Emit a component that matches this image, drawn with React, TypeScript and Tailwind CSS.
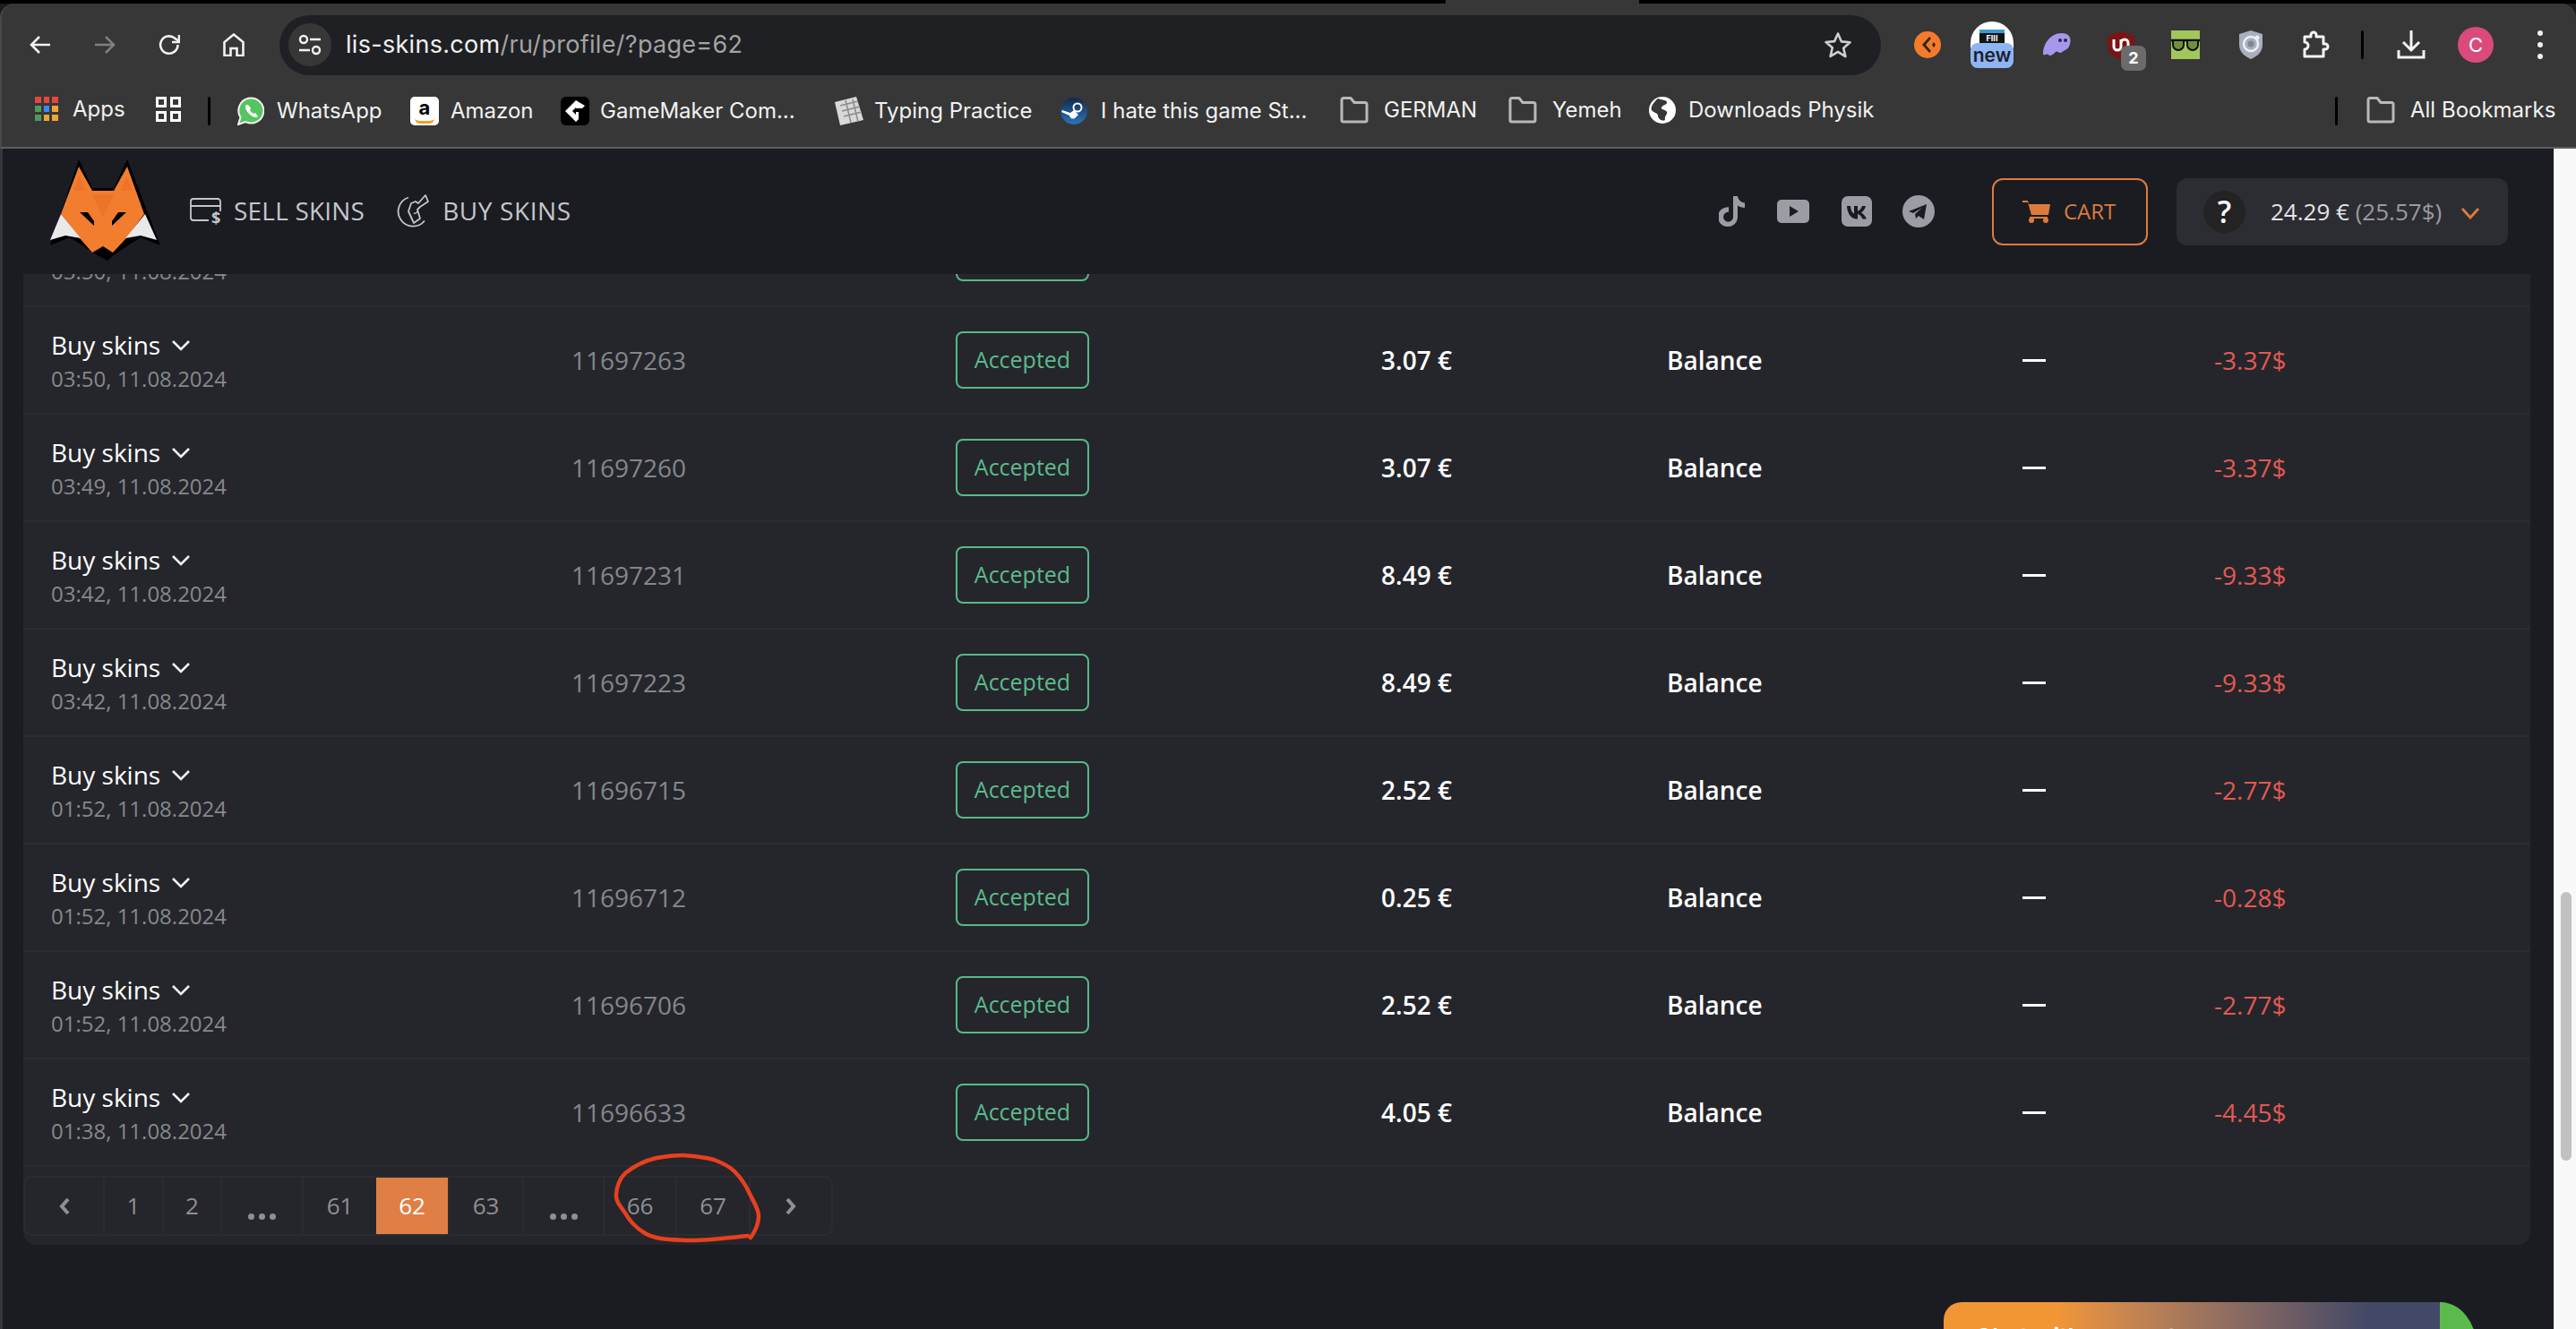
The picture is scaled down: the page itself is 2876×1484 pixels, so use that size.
import React from "react";

const ui = "font-['Inter','Liberation_Sans',sans-serif]";
const page = "font-['Open_Sans','Liberation_Sans',sans-serif]";

const rows = [
  ["03:50, 11.08.2024", "11697265", "3.07 €", "-3.37$"],
  ["03:50, 11.08.2024", "11697263", "3.07 €", "-3.37$"],
  ["03:49, 11.08.2024", "11697260", "3.07 €", "-3.37$"],
  ["03:42, 11.08.2024", "11697231", "8.49 €", "-9.33$"],
  ["03:42, 11.08.2024", "11697223", "8.49 €", "-9.33$"],
  ["01:52, 11.08.2024", "11696715", "2.52 €", "-2.77$"],
  ["01:52, 11.08.2024", "11696712", "0.25 €", "-0.28$"],
  ["01:52, 11.08.2024", "11696706", "2.52 €", "-2.77$"],
  ["01:38, 11.08.2024", "11696633", "4.05 €", "-4.45$"],
];

function S({ w, h, children, className = "" }: { w: number; h: number; children: React.ReactNode; className?: string }) {
  return (
    <svg width={w} height={h} viewBox={`0 0 ${w} ${h}`} fill="none" className={"shrink-0 " + className}>
      {children}
    </svg>
  );
}

function Folder() {
  return (
    <S w={32} h={30}>
      <path d="M2 3.500a2 2 0 0 1 2-2h8l4 5h12a2 2 0 0 1 2 2V26a2 2 0 0 1-2 2H4a2 2 0 0 1-2-2Z" stroke="#b9b9b9" strokeWidth="3" strokeLinejoin="round" />
    </S>
  );
}

function Bm({ cls, icon, label, gap }: { cls: string; icon: React.ReactNode; label: string; gap: string }) {
  return (
    <div className={"flex items-center shrink-0 " + cls}>
      {icon}
      <span className={gap + " text-[24px] leading-none text-[#f1f1f1] whitespace-nowrap"}>{label}</span>
    </div>
  );
}

function Toolbar() {
  return (
    <div className={ui + " shrink-0"}>
      <div className="h-[4px] bg-black flex">
        <div className="w-[1614px]" />
        <div className="w-[216px] bg-[#373737]" />
      </div>
      <div className="h-[162px] bg-[#373737] rounded-t-[16px] flex flex-col relative border-b-2 border-[#5e5e5e] border-l-2 border-l-[#4a4a4a]">
        <div className="h-[92px] flex items-center">
          <div className="ml-[31px] w-[279px] flex items-center">
            <S w={24} h={24} className="mr-[48px]">
              <path d="M23 12H2M11 3l-9 9 9 9" stroke="#f2f2f2" strokeWidth="2.600" />
            </S>
            <S w={24} h={24} className="mr-[48px]">
              <path d="M1 12h21M13 3l9 9-9 9" stroke="#7f7f7f" strokeWidth="2.600" />
            </S>
            <S w={24} h={24} className="mr-[48px]">
              <path d="M21.500 12A9.700 9.700 0 1 1 18 4.600L23 8" stroke="#f2f2f2" strokeWidth="2.600" />
              <path d="M23 1v8h-8" stroke="#f2f2f2" strokeWidth="2.600" />
            </S>
            <S w={24} h={26}>
              <path d="M1.500 25V10L12 1.500 22.500 10v15h-7v-8h-7v8Z" stroke="#f2f2f2" strokeWidth="2.600" />
            </S>
          </div>
          <div className="w-[1788px] h-[67px] bg-[#1f2023] rounded-full flex items-center pl-[10px] shrink-0">
            <div className="w-[48px] h-[48px] rounded-full bg-[#373737] flex items-center justify-center">
              <S w={26} h={24}>
                <circle cx="6" cy="6" r="4" stroke="#f2f2f2" strokeWidth="2.400" />
                <path d="M13 6h12M1 18h12" stroke="#f2f2f2" strokeWidth="2.400" />
                <circle cx="20" cy="18" r="4" stroke="#f2f2f2" strokeWidth="2.400" />
              </S>
            </div>
            <span className="ml-[16px] text-[27px] tracking-[0.3px] text-[#f1f1f1] whitespace-nowrap">
              lis-skins.com<span className="text-[#a3a3a3]">/ru/profile/?page=62</span>
            </span>
            <div className="flex-1" />
            <S w={32} h={30} className="mr-[32px]">
              <path d="M16 2.500l3.900 8.900 9.600.9-7.300 6.400 2.200 9.400L16 22.800l-8.400 5 2.200-9.500-7.300-6.300 9.600-.9Z" stroke="#cfcfcf" strokeWidth="2.600" strokeLinejoin="round" />
            </S>
          </div>
          <div className="flex items-center ml-[37px]">
            <svg width="30" height="30" viewBox="0 0 30 30" className="shrink-0">
              <circle cx="15" cy="15" r="15" fill="#f47b2a" />
              <path d="M17 6l-8 9 8 9 2-2-6-7 6-7Z" fill="#33261c" />
              <path d="M22 12l2 3-2 3-2-3Z" fill="#33261c" />
            </svg>
            <div className="ml-[33px] w-[48px] h-[52px] relative shrink-0">
              <div className="absolute top-0 left-0 w-[48px] h-[30px] bg-white rounded-t-[24px] flex justify-center pt-[9px]">
                <div className="w-[28px] h-[21px] bg-[#141414] border-t-[4px] border-[#3d9bd0] text-[9px] leading-[12px] text-white text-center font-bold">FIII</div>
              </div>
              <div className="absolute bottom-0 left-0 w-[48px] h-[28px] bg-[#8fb4f2] rounded-[8px] text-[21px] leading-[28px] font-semibold text-[#1a1f2b] text-center">new</div>
            </div>
            <svg width="32" height="28" viewBox="0 0 32 28" className="ml-[32px] shrink-0">
              <path d="M1 24C1 12 10 1 22 1c6 0 10 3 9.500 9-.5 6-3 9-6 10-2 .8-3.500 3-5.500 3s-2-2-4-1.500C14 22 12 26 9 26c-2.500 0-2-2-4-1.500C3 25 1 26 1 24Z" fill="#a797ec" />
              <circle cx="20" cy="9" r="2" fill="#2a2a3a" />
              <circle cx="26" cy="9" r="2" fill="#2a2a3a" />
            </svg>
            <div className="ml-[41px] w-[30px] h-[31px] relative shrink-0">
              <svg width="30" height="32" viewBox="0 0 30 32">
                <path d="M15 0l15 5v13c0 6-7 11-15 14C7 29 0 24 0 18V5Z" fill="#7b1414" />
                <path d="M7 9v8a4 4 0 0 0 8 0V9M15 13a4 4 0 0 1 8 0v6" stroke="#fff" strokeWidth="3" fill="none" />
              </svg>
              <div className="absolute left-[15px] top-[16px] w-[28px] h-[28px] rounded-[7px] bg-[#6b6b6b] text-white text-[18px] leading-[28px] font-bold text-center">2</div>
            </div>
            <div className="ml-[41px] w-[32px] h-[32px] bg-[#a1c65a] flex items-center justify-center shrink-0">
              <svg width="32" height="14" viewBox="0 0 32 14">
                <path d="M0 2h32" stroke="#111" strokeWidth="2.500" />
                <path d="M2 2h12v5a5.500 5.500 0 0 1-12 0ZM18 2h12v5a5.500 5.500 0 0 1-12 0Z" fill="#6f8f3f" stroke="#111" strokeWidth="2" />
              </svg>
            </div>
            <svg width="28" height="32" viewBox="0 0 28 32" className="ml-[43px] shrink-0">
              <path d="M14 0l13 4v12c0 8-6 13-13 16C7 29 1 24 1 16V4Z" fill="#a9afbd" />
              <circle cx="14" cy="15" r="8" fill="none" stroke="#eef0f4" strokeWidth="2.500" />
              <circle cx="14" cy="15" r="3.500" fill="#7e8698" />
              <circle cx="21" cy="8" r="2.500" fill="#eef0f4" />
            </svg>
            <S w={32} h={32} className="ml-[43px]">
              <path d="M3 7h7V5a3 3 0 0 1 6 0v2h8v8h2a3 3 0 0 1 0 6h-2v8H3v-8a4 4 0 0 0 0-8Z" stroke="#f5f5f5" strokeWidth="3" strokeLinejoin="round" />
            </S>
            <div className="ml-[34px] w-[3px] h-[32px] bg-black rounded-full" />
            <S w={32} h={32} className="ml-[37px]">
              <path d="M16 0v21M7 13l9 9 9-9" stroke="#f5f5f5" strokeWidth="3" />
              <path d="M2 22v8h28v-8" stroke="#f5f5f5" strokeWidth="3" />
            </S>
            <div className="ml-[36px] w-[40px] h-[40px] rounded-full bg-[#db4a7d] text-white text-[22px] leading-[40px] text-center shrink-0">C</div>
            <div className="ml-[49px] flex flex-col gap-[7px] shrink-0">
              <div className="w-[6px] h-[6px] rounded-full bg-[#f2f2f2]" />
              <div className="w-[6px] h-[6px] rounded-full bg-[#f2f2f2]" />
              <div className="w-[6px] h-[6px] rounded-full bg-[#f2f2f2]" />
            </div>
          </div>
        </div>
        <div className="flex-1 flex items-start pt-[12px]">
          <Bm
            cls="ml-[37px] w-[135px]"
            gap="ml-[16px]"
            label="Apps"
            icon={
              <div className="grid grid-cols-3 gap-[3px] w-[26px] shrink-0">
                {["#e5483b", "#e5483b", "#e5483b", "#4e9a5b", "#4285f4", "#eaa636", "#4e9a5b", "#eaa636", "#eaa636"].map((c, i) => (
                  <div key={i} className="h-[7px]" style={{ background: c }} />
                ))}
              </div>
            }
          />
          <div className="w-[28px] h-[28px] grid grid-cols-2 gap-[4px] shrink-0">
            <div className="border-[3px] border-white" />
            <div className="border-[3px] border-white" />
            <div className="border-[3px] border-white" />
            <div className="border-[3px] border-white" />
          </div>
          <div className="ml-[30px] w-[3px] h-[32px] bg-black rounded-full shrink-0" />
          <Bm
            cls="ml-[30px] w-[193px]"
            gap="ml-[14px]"
            label="WhatsApp"
            icon={
              <svg width="30" height="32" viewBox="0 0 30 32" className="shrink-0">
                <path d="M1 31l2.500-8A14 14 0 1 1 9 28Z" fill="#56c45f" stroke="#f2f2f2" strokeWidth="2" />
                <path d="M10 9c-2 2-1 6 3 10s8 5 10 3l-3-4-2 1c-2-1-3-3-4-4l1-2-3-4Z" fill="#fff" />
              </svg>
            }
          />
          <Bm
            cls="w-[168px]"
            gap="ml-[13px]"
            label="Amazon"
            icon={
              <div className="w-[32px] h-[32px] bg-white rounded-[5px] relative shrink-0 text-black text-[22px] leading-[24px] font-bold text-center">
                a
                <div className="absolute bottom-[2px] left-[5px] w-[22px] h-[6px] border-b-[3px] border-[#f39c2b] rounded-b-full" />
              </div>
            }
          />
          <Bm
            cls="w-[306px]"
            gap="ml-[12px]"
            label="GameMaker Com..."
            icon={
              <svg width="32" height="32" viewBox="0 0 32 32" className="shrink-0">
                <rect width="32" height="32" rx="6" fill="#000" />
                <path d="M17 4L5 16l12 12 3-3v-8h-6l3-4h7l3-3Z" fill="#fff" />
                <path d="M13 16l4-4v8Z" fill="#000" />
              </svg>
            }
          />
          <Bm
            cls="w-[252px]"
            gap="ml-[12px]"
            label="Typing Practice"
            icon={
              <svg width="32" height="32" viewBox="0 0 32 32" className="shrink-0">
                <path d="M0 6L24 0l8 26-26 6Z" fill="#d8d8d8" />
                <path d="M6 10l20-5M8 16l20-5M10 22l20-5M12 4l6 25M20 3l6 25" stroke="#8a8a8a" strokeWidth="1.500" />
              </svg>
            }
          />
          <Bm
            cls="w-[312px]"
            gap="ml-[15px]"
            label="I hate this game St..."
            icon={
              <svg width="30" height="32" viewBox="0 0 30 32" className="shrink-0">
                <defs>
                  <linearGradient id="st" x1="0" y1="0" x2="0" y2="1">
                    <stop offset="0" stopColor="#13294b" />
                    <stop offset="1" stopColor="#2a75bb" />
                  </linearGradient>
                </defs>
                <circle cx="15" cy="16" r="15" fill="url(#st)" />
                <circle cx="19" cy="12" r="4.500" fill="none" stroke="#fff" strokeWidth="2" />
                <path d="M1 17l9 4a4 4 0 0 0 6 3l4-4-5-5-4 3-9-3Z" fill="#fff" />
              </svg>
            }
          />
          <Bm cls="w-[188px]" gap="ml-[17px]" label="GERMAN" icon={<Folder />} />
          <Bm cls="w-[157px]" gap="ml-[17px]" label="Yemeh" icon={<Folder />} />
          <Bm
            cls="w-[766px]"
            gap="ml-[14px]"
            label="Downloads Physik"
            icon={
              <svg width="30" height="30" viewBox="0 0 30 30" className="shrink-0">
                <circle cx="15" cy="15" r="15" fill="#fff" />
                <path d="M10 2c4 2 9 1 10 4s-5 3-6 6 5 2 6 5-3 4-2 9c-4 2-8-2-8-5s-5-3-7-6 3-10 7-13Z" fill="#373737" />
              </svg>
            }
          />
          <div className="w-[3px] h-[32px] bg-black rounded-full shrink-0" />
          <Bm cls="ml-[32px]" gap="ml-[17px]" label="All Bookmarks" icon={<Folder />} />
        </div>
      </div>
    </div>
  );
}

function Header() {
  return (
    <div className="h-[140px] bg-[#1b1c21] relative z-10 flex items-center shrink-0">
      <svg width="130" height="114" viewBox="50 178 130 114" className="ml-[47px] mb-[2px] shrink-0">
        <path d="M88 178l15 32h24l15-32 37 96-22-9-29 19-8 7-13-7-29-19-22 9Z" fill="#000" />
        <path d="M88 186l15 27h24l15-27 19 53-21 28-14 15-11-7-12 7-14-16-21-27Z" fill="#f27d2f" />
        <path d="M103 217h24l-12 26ZM82 213h13l-6-17ZM135 213h13l-7-17Z" fill="#ee732a" />
        <path d="M68 239l22 27-17-3-17 5ZM162 239l-22 27 17-3 18 5Z" fill="#e9e9ea" />
        <path d="M89 237h9l7 10v5ZM141 237h-9l-7 10v5Z" fill="#000" />
      </svg>
      <S w={36} h={28} className="ml-[32px] mt-[-5px]">
        <path d="M34 16V5a3 3 0 0 0-3-3H4a3 3 0 0 0-3 3v18a3 3 0 0 0 3 3h17M1 10h33" stroke="#c5c6cc" strokeWidth="1.800" />
      </S>
      <span className="relative w-0 h-0">
        <span className={page + " absolute left-[-12px] top-[-2px] text-[18px] leading-[18px] font-bold text-[#c5c6cc]"}>$</span>
      </span>
      <span className={page + " ml-[13px] mb-[2px] text-[28px] text-[#c5c6cc] tracking-[0.2px] whitespace-nowrap"}>SELL SKINS</span>
      <S w={38} h={38} className="ml-[35px] mb-[2px]">
        <path d="M14 4.500a16.500 16.500 0 1 0 18 26" stroke="#c5c6cc" strokeWidth="1.800" />
        <path d="M33 2l3 7-9 6-3 3 3 10-7 5-6-13 3-9 5-2 3 2Z" stroke="#c5c6cc" strokeWidth="1.800" strokeLinejoin="round" />
        <path d="M20 22c2 1 3 0 4-2" stroke="#c5c6cc" strokeWidth="1.500" />
      </S>
      <span className={page + " ml-[14px] mb-[2px] text-[28px] text-[#c5c6cc] tracking-[0.6px] whitespace-nowrap"}>BUY SKINS</span>
      <div className="flex-1" />
      <svg width="30" height="34" viewBox="0 0 30 34" className="shrink-0">
        <path d="M16 0h5c.5 4 3.500 7 8 7.500v5.500c-3 0-6-1-8-2.500V23a11 11 0 1 1-10-10.800v5.600A5.500 5.500 0 1 0 16 23Z" fill="#9a9da4" />
      </svg>
      <svg width="36" height="26" viewBox="0 0 36 26" className="ml-[35px] shrink-0">
        <rect width="36" height="26" rx="5" fill="#9a9da4" />
        <path d="M14 7l10 6-10 6Z" fill="#1b1c21" />
      </svg>
      <svg width="34" height="34" viewBox="0 0 34 34" className="ml-[36px] shrink-0">
        <rect width="34" height="34" rx="7" fill="#9a9da4" />
        <path d="M6 11h4c.3 5 2 7.500 4 8.500V11h4v5.500c2-.3 4-2.500 5-5.500h4c-.7 3.500-3 6-5 7.500 2 1 4.500 3.500 6 7h-4.500c-1-2.500-3-5-5.500-5.500v5.500h-1C11 25.500 6.500 20 6 11Z" fill="#1b1c21" />
      </svg>
      <svg width="36" height="36" viewBox="0 0 36 36" className="ml-[34px] shrink-0">
        <circle cx="18" cy="18" r="18" fill="#9a9da4" />
        <path d="M7 18l20-8-3 17-6-4-3 3-1-5 8-7-10 6Z" fill="#1b1c21" />
      </svg>
      <div className="ml-[64px] w-[174px] h-[75px] border-2 border-[#dd7b3d] rounded-[12px] flex items-center pl-[32px] shrink-0">
        <svg width="31" height="26" viewBox="0 0 31 26" className="shrink-0">
          <path d="M0 1h6l1 4h24l-2 12H10L6 3H0Z" fill="#dd7b3d" />
          <path d="M8 20h20" stroke="#dd7b3d" strokeWidth="2" />
          <circle cx="10" cy="23" r="3" fill="#dd7b3d" />
          <circle cx="26" cy="23" r="3" fill="#dd7b3d" />
        </svg>
        <span className={page + " ml-[15px] text-[24px] text-[#dd7b3d]"}>CART</span>
      </div>
      <div className="ml-[32px] mr-[51px] w-[370px] h-[75px] bg-[#2c2d33] rounded-[12px] flex items-center pl-[30px] shrink-0">
        <div className={page + " w-[47px] h-[47px] rounded-full bg-[#232323] text-white text-[34px] font-semibold leading-[47px] text-center"}>?</div>
        <span className={page + " ml-[28px] text-[26px] text-[#e4e4e4] whitespace-nowrap"}>
          24.29 € <span className="text-[#9b9b9b]">(25.57$)</span>
        </span>
        <S w={22} h={14} className="ml-[21px] mt-[4px]">
          <path d="M2 2l9 10 9-10" stroke="#dd7b3d" strokeWidth="2.800" />
        </S>
      </div>
    </div>
  );
}

function Row({ r }: { r: string[] }) {
  return (
    <div className={"h-[120px] border-b-2 border-[#2b2c31] grid grid-cols-[581px_429px_475px_319px_397px_214px_1fr] items-center pl-[31px] " + page}>
      <div className="pt-[2px]">
        <div className="flex items-center h-[34px]">
          <span className="text-[28px] leading-[34px] text-white">Buy skins</span>
          <S w={22} h={14} className="ml-[12px] mt-[2px]">
            <path d="M2 2l9 9 9-9" stroke="#f2f2f2" strokeWidth="2.600" />
          </S>
        </div>
        <div className="text-[24px] leading-[32px] mt-[5px] text-[#87888c]">{r[0]}</div>
      </div>
      <div className="text-[28px] text-[#85868a]">{r[1]}</div>
      <div>
        <div className="w-[149px] h-[64px] border-2 border-[#57b98a] rounded-[8px] flex items-center justify-center text-[25px] text-[#5cbb8e]">Accepted</div>
      </div>
      <div className="text-[28px] font-semibold text-white">{r[2]}</div>
      <div className="text-[28px] font-semibold text-white">Balance</div>
      <div className="w-[26px] h-[3px] bg-white" />
      <div className="text-[28px] text-[#e25a52]">{r[3]}</div>
    </div>
  );
}

const pages: [string, string][] = [
  ["w-[87px]", "<"],
  ["w-[66px]", "1"],
  ["w-[65px]", "2"],
  ["w-[91px]", "..."],
  ["w-[83px]", "61"],
  ["w-[80px]", "62"],
  ["w-[83px]", "63"],
  ["w-[90px]", "..."],
  ["w-[81px]", "66"],
  ["w-[82px]", "67"],
  ["w-[92px]", ">"],
];

function Pager() {
  return (
    <div className={"flex w-fit h-[67px] mt-[10px] border-2 border-[#2b2c31] rounded-[10px] " + page}>
      {pages.map(([w, t], i) => {
        const active = t === "62";
        const base = w + " flex items-center justify-center text-[26px] shrink-0 " + (i > 0 ? "border-l-2 border-[#2b2c31] " : "");
        if (active) return <div key={i} className={w + " flex items-center justify-center text-[26px] shrink-0 bg-[#e07f45] text-white"}>{t}</div>;
        if (t === "<" || t === ">")
          return (
            <div key={i} className={base}>
              <S w={14} h={20}>
                <path d={t === "<" ? "M11 2L4 10l7 8" : "M3 2l7 8-7 8"} stroke="#8f9094" strokeWidth="4" />
              </S>
            </div>
          );
        if (t === "...")
          return (
            <div key={i} className={base + "gap-[5px] pt-[24px]"}>
              <div className="w-[7px] h-[7px] rounded-full bg-[#8f9094]" />
              <div className="w-[7px] h-[7px] rounded-full bg-[#8f9094]" />
              <div className="w-[7px] h-[7px] rounded-full bg-[#8f9094]" />
            </div>
          );
        return <div key={i} className={base + "text-[#8f9094]"}>{t}</div>;
      })}
    </div>
  );
}

export default function App() {
  return (
    <div className="w-[2876px] h-[1484px] overflow-hidden flex flex-col bg-[#1b1c21] relative">
      <Toolbar />
      <div className="flex-1 flex min-h-0">
        <div className="flex-1 min-w-0 flex flex-col border-l-[3px] border-[#36373c] overflow-hidden">
          <Header />
          <div className="ml-[23px] w-[2799px] h-[1167px] -mt-[83px] bg-[#25262b] rounded-b-[14px] shrink-0">
            {rows.map((r, i) => (
              <Row key={i} r={r} />
            ))}
            <Pager />
          </div>
        </div>
        <div className="w-[25px] bg-[#f8f8f8] shrink-0 pl-[7px] pt-[830px] border-l border-[#ececec]">
          <div className="w-[12px] h-[300px] rounded-full bg-[#c1c1c1]" />
        </div>
      </div>
      <div className={ui + " absolute left-[2170px] top-[1454px] w-[595px] h-[120px] rounded-tl-[20px] rounded-tr-[41px_50px] overflow-hidden flex bg-gradient-to-r from-[#f29635] from-[21%] to-[#434867] to-[80%]"}>
        <span className="ml-[35px] mt-[26px] text-[26px] leading-none font-semibold text-white whitespace-nowrap">Chat with support</span>
        <div className="absolute left-[554px] top-0 w-[41px] h-[120px] bg-[#5abb4c] rounded-bl-[50px_60px]" />
      </div>
      <svg width="180" height="110" viewBox="680 1285 180 110" className="absolute left-[680px] top-[1285px] pointer-events-none">
        <path
          d="M835 1380C812 1382 790 1386 767 1385C745 1384 732 1384 720 1377C708 1370 702 1362 697 1353C691 1345 687 1340 688 1333C689 1322 692 1316 698 1310C708 1302 720 1296 733 1293C744 1291 752 1290 763 1290C775 1291 787 1292 797 1295C808 1299 814 1302 820 1308C828 1316 833 1324 837 1333C842 1343 847 1350 847 1358C847 1368 843 1375 838 1382"
          fill="none"
          stroke="#e8401f"
          strokeWidth="4.500"
          strokeLinecap="round"
        />
      </svg>
    </div>
  );
}
